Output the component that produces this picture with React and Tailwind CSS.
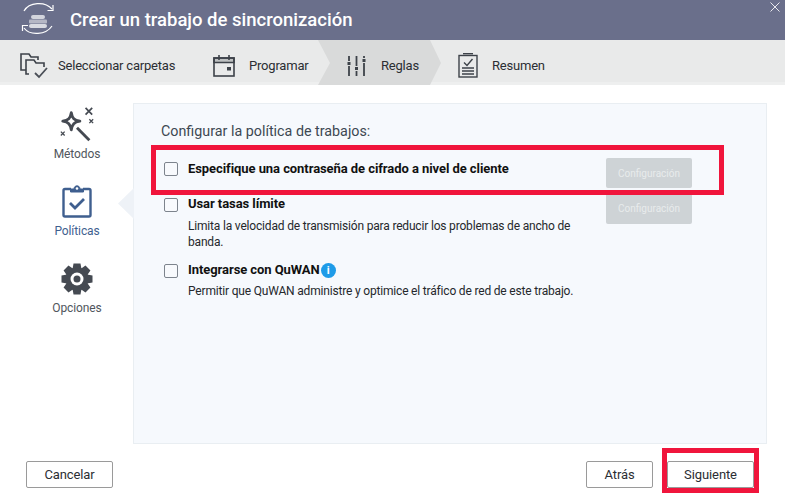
import React from 'react';

const LogoIcon = () => (
  <svg width="40" height="40" viewBox="0 0 40 40" fill="none" stroke="white" strokeWidth="1.2">
    <path d="M6 11 C11 2 27 1 34 9" />
    <path d="M35 5 V10.5 H29.5" />
    <path d="M34 26 C28 35 12 36 6 28" />
    <path d="M4.5 31 V25.5 H10" />
    <rect x="13" y="15" width="14" height="4" rx="2" fill="white" fillOpacity="0.7" stroke="none" />
    <rect x="11" y="19.5" width="18" height="4" rx="1" fill="white" fillOpacity="0.5" stroke="none" />
    <rect x="11" y="24" width="18" height="4" rx="2" fill="white" fillOpacity="0.75" stroke="none" />
  </svg>
);

const FoldersIcon = () => (
  <svg width="28" height="26" viewBox="0 0 28 26" fill="none" stroke="#3d4249" strokeWidth="1.6">
    <path d="M6 17 H1 V1 H9 L11 4 H18 V7" />
    <path d="M9 21 H6 V7 H14 L16 10 H24 V14" />
    <path d="M15 20 L19 24 L27 15" strokeWidth="1.8" stroke="#4a4f57" />
  </svg>
);

const CalendarIcon = () => (
  <svg width="22" height="22" viewBox="0 0 22 22" fill="none" stroke="#3d4249" strokeWidth="1.6">
    <rect x="1" y="3" width="20" height="18" />
    <path d="M1 3 H21 V7.5 H1 Z" fill="#3d4249" fillOpacity="0.25" />
    <path d="M6 0 V5 M16 0 V5" />
    <rect x="14" y="12" width="4" height="3.5" fill="#3d4249" stroke="none" />
  </svg>
);

const SlidersIcon = () => (
  <svg width="19" height="22" viewBox="0 0 19 22" fill="none" stroke="#3d4249" strokeWidth="1.8">
    <path d="M2 1 V6 M2 11 V21" />
    <rect x="0.5" y="7" width="3" height="3" fill="#3d4249" stroke="none" />
    <path d="M9.5 1 V11 M9.5 16 V21" />
    <rect x="8" y="12" width="3" height="3" fill="#3d4249" stroke="none" />
    <path d="M17 1 V3 M17 8 V21" />
    <rect x="15.5" y="4" width="3" height="3" fill="#3d4249" stroke="none" />
  </svg>
);

const SummaryIcon = () => (
  <svg width="20" height="25" viewBox="0 0 20 25" fill="none" stroke="#3d4249" strokeWidth="1.4">
    <rect x="1" y="2.5" width="18" height="21.5" />
    <path d="M5 0.7 H15" />
    <path d="M6 9.5 L9 12.5 L14.5 6" />
    <path d="M4 15 H16 M4 18 H16 M4 21 H16" />
  </svg>
);

const WandIcon = () => (
  <svg width="38" height="38" viewBox="0 0 40 38" fill="none" stroke="#454a52">
    <path d="M14 6 C15 12 17 14 23 15 C17 16 15 18 14 24 C13 18 11 16 5 15 C11 14 13 12 14 6 Z" strokeWidth="3" strokeLinejoin="round" fill="white" />
    <path d="M20 22 L33 35" strokeWidth="3" />
    <path d="M29 1 L36 8 M36 1 L29 8" strokeWidth="1.8" />
    <path d="M33 13 L37 17 M37 13 L33 17" strokeWidth="1.4" />
    <path d="M3 26 L7 30 M7 26 L3 30" strokeWidth="1.4" />
  </svg>
);

const ClipboardIcon = () => (
  <svg width="30" height="34" viewBox="0 0 30 34" fill="none" stroke="#3f5f8f" strokeWidth="2.4">
    <path d="M9 5 H3 Q1.5 5 1.5 6.5 V31 Q1.5 32.5 3 32.5 H27 Q28.5 32.5 28.5 31 V6.5 Q28.5 5 27 5 H21" />
    <path d="M8.5 8 V5 H12 C12 0.8 18 0.8 18 5 H21.5 V8 Z" fill="#3f5f8f" strokeWidth="1" />
    <circle cx="15" cy="4.5" r="1.3" fill="white" stroke="none" />
    <path d="M8 19 L13 24 L22 15" strokeWidth="2.8" />
  </svg>
);

const GearIcon = () => (
  <svg width="32" height="32" viewBox="0 0 32 32">
    <circle cx="16" cy="16" r="11.5" fill="#454a52" />
    {[0, 45, 90, 135, 180, 225, 270, 315].map((deg) => (
      <path key={deg} d="M12.5 0.5 H19.5 L20.5 6 H11.5 Z" fill="#454a52" transform={`rotate(${deg} 16 16)`} />
    ))}
    <circle cx="16" cy="16" r="6.5" fill="white" />
    <circle cx="16" cy="16" r="3.5" fill="#454a52" />
  </svg>
);

const CloseIcon = () => (
  <svg width="10" height="10" viewBox="0 0 10 10" stroke="white" strokeOpacity="0.85" strokeWidth="1">
    <path d="M0.5 0.5 L9.5 9.5 M9.5 0.5 L0.5 9.5" />
  </svg>
);

const Checkbox = () => (
  <span className="w-[14px] h-[14px] shrink-0 rounded-[2px] border border-[#7d848d] bg-[#f8fafd]" />
);

const DisabledButton = ({ className }) => (
  <button className={`w-[86px] rounded-[2px] bg-[#ced3d6] text-[10px] text-[#e8ebec] ${className}`}>
    Configuración
  </button>
);

const FooterButton = ({ children, className }) => (
  <button className={`h-[27px] rounded-[2px] border border-[#9a9a9a] bg-white text-[13px] tracking-[-0.1px] text-[#2b2e33] ${className}`}>
    {children}
  </button>
);

const App = () => {
  return (
    <div className="relative w-[785px] h-[502px] overflow-hidden bg-white font-['Roboto',sans-serif]">
      {/* Title bar */}
      <div className="relative h-[40px] bg-[#6a6f8b] flex items-center pl-[18px] text-white">
        <LogoIcon />
        <h1 className="ml-[12px] text-[18.5px] font-medium leading-none">Crear un trabajo de sincronización</h1>
        <span className="absolute top-[2px] right-[5px]">
          <CloseIcon />
        </span>
      </div>

      {/* Steps */}
      <div className="h-[45px] bg-[#e9eaea] shadow-[inset_0_-3px_0_#eeefef] flex text-[13px] tracking-[-0.2px] text-[#2b2e33]">
        <div className="w-[198px] pl-[20px] pt-[6px] flex items-center">
          <FoldersIcon />
          <span className="ml-[10px]">Seleccionar carpetas</span>
        </div>
        <div className="w-[120px] pl-[15px] pt-[6px] flex items-center">
          <CalendarIcon />
          <span className="ml-[14px]">Programar</span>
        </div>
        <div className="w-[123px] pl-[29px] pt-[6px] flex items-center bg-[#d9dada] [clip-path:polygon(0_0,112px_0,123px_23px,112px_45px,0_45px,12px_23px)]">
          <SlidersIcon />
          <span className="ml-[15px]">Reglas</span>
        </div>
        <div className="pl-[17px] pt-[6px] flex items-center">
          <SummaryIcon />
          <span className="ml-[14px]">Resumen</span>
        </div>
      </div>

      {/* Body */}
      <div className="flex h-[359px] pt-[18px]">
        <nav className="w-[133px] shrink-0 pl-[44px] pt-[3px] text-[12px] tracking-[-0.1px]">
          <div className="w-[66px] flex flex-col items-center text-[#51565d]">
            <WandIcon />
            <span className="mt-[3px] leading-[14px]">Métodos</span>
          </div>
          <div className="w-[66px] mt-[23px] flex flex-col items-center text-[#3f5f8f]">
            <ClipboardIcon />
            <span className="mt-[6px] leading-[14px]">Políticas</span>
          </div>
          <div className="w-[66px] mt-[25px] flex flex-col items-center text-[#51565d]">
            <GearIcon />
            <span className="mt-[6px] leading-[14px]">Opciones</span>
          </div>
        </nav>

        <section className="relative w-[634px] h-[341px] border border-[#e9eef2] bg-[#f6f9fd] pl-[27px] pt-[19px]">
          {/* Pointer towards the selected tab */}
          <span className="absolute left-[-16px] top-[84px] w-[16px] h-[31px] bg-[#eef2f7] [clip-path:polygon(100%_0,100%_100%,0_50%)]" />

          <h2 className="text-[14.3px] leading-[16px] text-[#3d4852]">Configurar la política de trabajos:</h2>

          <div className="relative mt-[20px] flex items-center h-[20px] gap-[10px] pl-[3px]">
            <Checkbox />
            <span className="text-[13px] font-bold tracking-[-0.07px] text-[#111]">Especifique una contraseña de cifrado a nivel de cliente</span>
            <DisabledButton className="absolute left-[445px] top-[-1px] h-[30px]" />
          </div>

          <div className="relative mt-[19px] flex gap-[10px] pl-[3px]">
            <Checkbox />
            <div className="w-[400px] mt-[-2px]">
              <div className="text-[13px] font-bold tracking-[-0.07px] leading-[16px] text-[#111]">Usar tasas límite</div>
              <p className="mt-[6px] text-[12px] tracking-[-0.18px] leading-[16px] text-[#25282c]">
                Limita la velocidad de transmisión para reducir los problemas de ancho de banda.
              </p>
            </div>
            <DisabledButton className="absolute left-[445px] top-[-5px] h-[31px]" />
          </div>

          <div className="mt-[14px] flex gap-[10px] pl-[3px]">
            <Checkbox />
            <div className="mt-[-2px]">
              <div className="flex items-center gap-[1px] text-[13px] font-bold tracking-[-0.07px] leading-[16px] text-[#111]">
                Integrarse con QuWAN
                <span className="w-[15px] h-[15px] rounded-full bg-[#1e9be8] text-white text-[11px] font-bold leading-[15px] text-center">i</span>
              </div>
              <p className="mt-[5px] text-[12px] tracking-[-0.18px] leading-[16px] text-[#25282c]">
                Permitir que QuWAN administre y optimice el tráfico de red de este trabajo.
              </p>
            </div>
          </div>
        </section>
      </div>

      {/* Footer */}
      <div className="flex items-center pl-[26px] pt-[17px]">
        <FooterButton className="w-[87px]">Cancelar</FooterButton>
        <FooterButton className="w-[67px] ml-[473px]">Atrás</FooterButton>
        <FooterButton className="w-[87px] ml-[14px]">Siguiente</FooterButton>
      </div>

      {/* Red highlight boxes drawn over the screenshot */}
      <div className="absolute left-[151px] top-[145px] w-[573px] h-[50px] border-[5px] border-[#f0153c]" />
      <div className="absolute left-[662px] top-[448px] w-[97px] h-[45px] border-[5px] border-[#f0153c]" />
    </div>
  );
};

export default App;
